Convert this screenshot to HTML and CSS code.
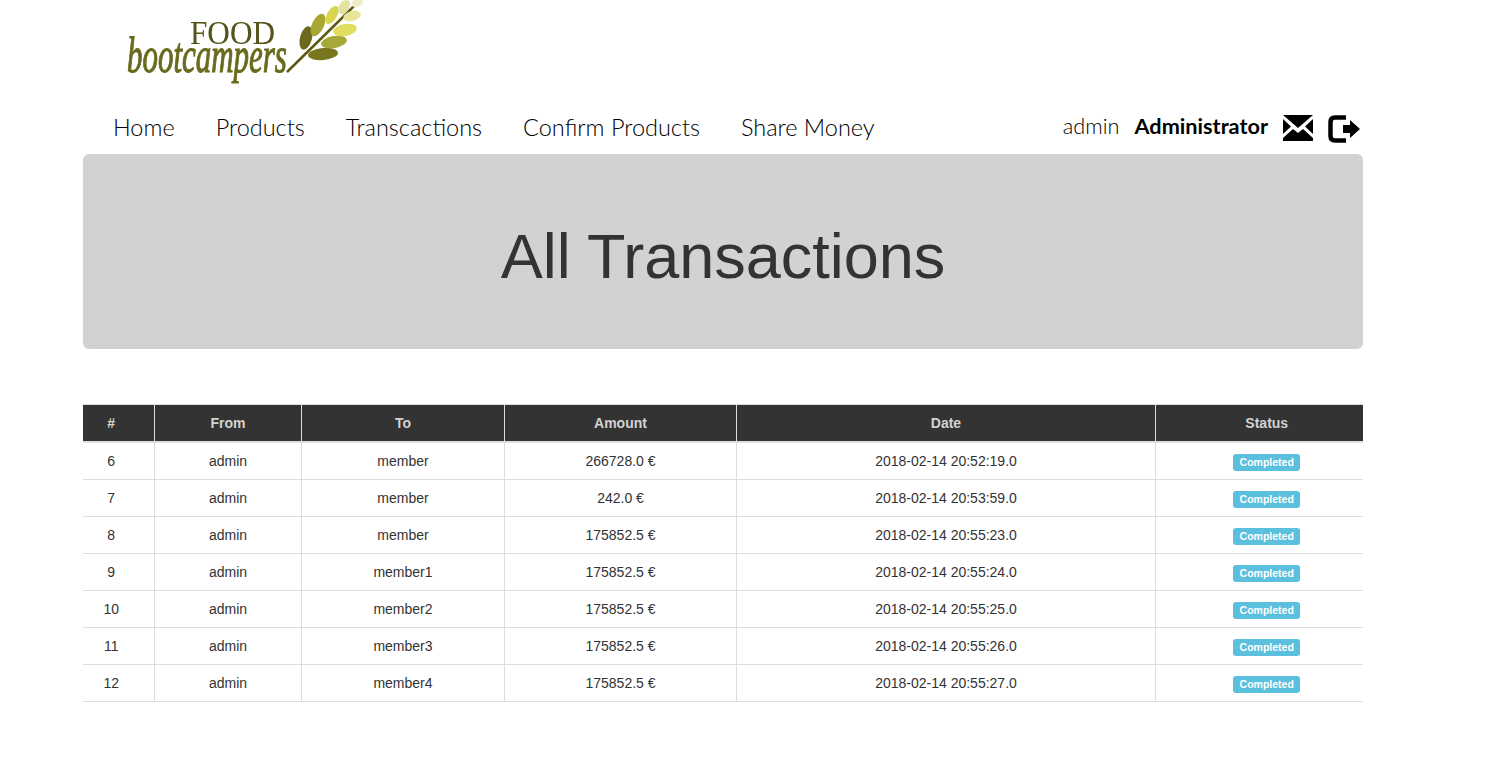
FILE: index.html
```html
<!DOCTYPE html>
<html lang="en">
<head>
    <meta charset="UTF-8">
    <title>All Transactions</title>
    <link rel="stylesheet" href="styles.css">
</head>
<body>
    <div class="container">
        <div class="logo">
            <svg width="260" height="100" viewBox="0 0 260 100">
                <text x="87" y="44" class="logo-food" textLength="85" lengthAdjust="spacingAndGlyphs">FOOD</text>
                <text class="logo-boot" transform="translate(24 72) scale(.86 1.4)">bootcampers</text>
                <path d="M184 72 L239 18 L257 0" stroke="#5c5a12" stroke-width="2.5" fill="none"/>
                <ellipse cx="203" cy="38" rx="6" ry="12" transform="rotate(15 203 38)" fill="#6b6a1c"/>
                <ellipse cx="220" cy="54" rx="15" ry="6" transform="rotate(-5 220 54)" fill="#77761f"/>
                <ellipse cx="215" cy="25" rx="6" ry="12" transform="rotate(25 215 25)" fill="#a8a632"/>
                <ellipse cx="231" cy="42" rx="13" ry="6" transform="rotate(-10 231 42)" fill="#a6a83a"/>
                <ellipse cx="229" cy="15" rx="5" ry="10" transform="rotate(30 229 15)" fill="#d7d64e"/>
                <ellipse cx="242" cy="30" rx="12" ry="6" transform="rotate(-10 242 30)" fill="#e0dd60"/>
                <ellipse cx="241" cy="7" rx="5" ry="8" transform="rotate(35 241 7)" fill="#e4e3a0"/>
                <ellipse cx="249" cy="16" rx="9" ry="5" transform="rotate(-15 249 16)" fill="#e8e59a"/>
                <ellipse cx="254" cy="3" rx="6" ry="4" transform="rotate(-20 254 3)" fill="#efecc8"/>
            </svg>
        </div>

        <nav class="navbar">
            <ul class="nav-links">
                <li><a href="#">Home</a></li>
                <li><a href="#">Products</a></li>
                <li><a href="#">Transcactions</a></li>
                <li><a href="#">Confirm Products</a></li>
                <li><a href="#">Share Money</a></li>
            </ul>
            <div class="nav-user">
                <span class="user-name">admin</span>
                <span class="user-role">Administrator</span>
                <a href="#" class="nav-icon">
                    <svg width="30" height="26" viewBox="0 0 30 26">
                        <path d="M0 0H30L15 13Z" fill="#000"/>
                        <path d="M0 4V19L8 11.500Z" fill="#000"/>
                        <path d="M30 4V19L22 11.500Z" fill="#000"/>
                        <path d="M0 26V23L10 14L15 18L20 14L30 23V26Z" fill="#000"/>
                    </svg>
                </a>
                <a href="#" class="nav-icon">
                    <svg width="33" height="28" viewBox="0 0 33 28">
                        <path d="M18 2.500H7Q2.500 2.500 2.500 7V21Q2.500 25.500 7 25.500H18" fill="none" stroke="#000" stroke-width="4.500"/>
                        <path d="M15 10H22V5L32 14L22 23V18H15Z" fill="#000"/>
                    </svg>
                </a>
            </div>
        </nav>

        <div class="banner">
            <h1>All Transactions</h1>
        </div>

        <table class="transactions">
            <colgroup>
                <col class="col-id">
                <col class="col-from">
                <col class="col-to">
                <col class="col-amount">
                <col class="col-date">
                <col class="col-status">
            </colgroup>
            <thead>
                <tr>
                    <th>#</th>
                    <th>From</th>
                    <th>To</th>
                    <th>Amount</th>
                    <th>Date</th>
                    <th>Status</th>
                </tr>
            </thead>
            <tbody>
                <tr><td>6</td><td>admin</td><td>member</td><td>266728.0 €</td><td>2018-02-14 20:52:19.0</td><td><span class="badge">Completed</span></td></tr>
                <tr><td>7</td><td>admin</td><td>member</td><td>242.0 €</td><td>2018-02-14 20:53:59.0</td><td><span class="badge">Completed</span></td></tr>
                <tr><td>8</td><td>admin</td><td>member</td><td>175852.5 €</td><td>2018-02-14 20:55:23.0</td><td><span class="badge">Completed</span></td></tr>
                <tr><td>9</td><td>admin</td><td>member1</td><td>175852.5 €</td><td>2018-02-14 20:55:24.0</td><td><span class="badge">Completed</span></td></tr>
                <tr><td>10</td><td>admin</td><td>member2</td><td>175852.5 €</td><td>2018-02-14 20:55:25.0</td><td><span class="badge">Completed</span></td></tr>
                <tr><td>11</td><td>admin</td><td>member3</td><td>175852.5 €</td><td>2018-02-14 20:55:26.0</td><td><span class="badge">Completed</span></td></tr>
                <tr><td>12</td><td>admin</td><td>member4</td><td>175852.5 €</td><td>2018-02-14 20:55:27.0</td><td><span class="badge">Completed</span></td></tr>
            </tbody>
        </table>
    </div>
</body>
</html>
```

FILE: styles.css
```css
body {
    font-family: 'Liberation Sans', Arial, sans-serif;
    font-size: 14px;
    color: #333;
    background-color: #fff;
    margin: 0;
    padding: 0;
}

.container {
    width: 1280px;
    margin-left: 83px;
}

.logo {
    height: 104px;
    padding-left: 20px;
}

.logo svg {
    display: block;
    filter: blur(0.5px);
}

.logo-food {
    font-family: 'Liberation Serif', serif;
    font-size: 34px;
    fill: #55541a;
}

.logo-boot {
    font-family: 'Liberation Serif', serif;
    font-style: italic;
    font-size: 36px;
    fill: #6a6a1c;
    stroke: #6a6a1c;
    stroke-width: 0.8px;
}

.navbar {
    display: flex;
    justify-content: space-between;
    height: 50px;
}

.nav-links {
    display: flex;
    gap: 41px;
    list-style: none;
    margin: 0;
    padding: 9px 0 0 30px;
}

.nav-links a {
    font-family: 'Lato', sans-serif;
    font-size: 23.500px;
    font-weight: 300;
    color: #000;
    text-decoration: none;
}

.nav-user {
    display: flex;
    align-items: flex-start;
    padding-top: 9px;
    font-family: 'Lato', sans-serif;
    font-size: 21.700px;
    color: #000;
}

.user-name {
    font-weight: 300;
    margin-right: 15px;
}

.user-role {
    font-weight: 700;
    margin-right: 15px;
}

.nav-icon {
    display: block;
    margin-right: 2px;
    padding-top: 2px;
}

.nav-icon + .nav-icon {
    margin-left: 13px;
}

.banner {
    height: 187px;
    padding-top: 8px;
    background-color: #d2d2d2;
    border-radius: 6px;
    display: flex;
    justify-content: center;
    align-items: center;
    margin-bottom: 55px;
}

.banner h1 {
    font-size: 63px;
    font-weight: 400;
    color: #333;
    margin: 0;
}

.transactions {
    width: 1280px;
    table-layout: fixed;
    border-collapse: collapse;
    text-align: center;
}

.col-id { width: 71px; }
.col-from { width: 147px; }
.col-to { width: 203px; }
.col-amount { width: 232px; }
.col-date { width: 419px; }
.col-status { width: 208px; }

.transactions th {
    height: 36px;
    padding: 0 0 0 1px;
    background-color: #333;
    color: #d2d2d2;
    font-weight: 700;
    border-top: 1px solid #ddd;
    border-bottom: 2px solid #ddd;
    border-left: 1px solid #ddd;
}

.transactions td {
    height: 36px;
    padding: 0 0 0 1px;
    border-bottom: 1px solid #ddd;
    border-left: 1px solid #ddd;
}

.transactions th:first-child,
.transactions td:first-child {
    border-left: none;
    padding: 0 14px 0 0;
}

.transactions th:last-child,
.transactions td:last-child {
    padding: 0 0 0 15px;
}

.badge {
    display: inline-block;
    background-color: #5bc0de;
    color: #fff;
    font-size: 10.500px;
    font-weight: 700;
    line-height: 11px;
    padding: 3px 6.500px;
    border-radius: 3px;
    margin-top: 2px;
}
```
